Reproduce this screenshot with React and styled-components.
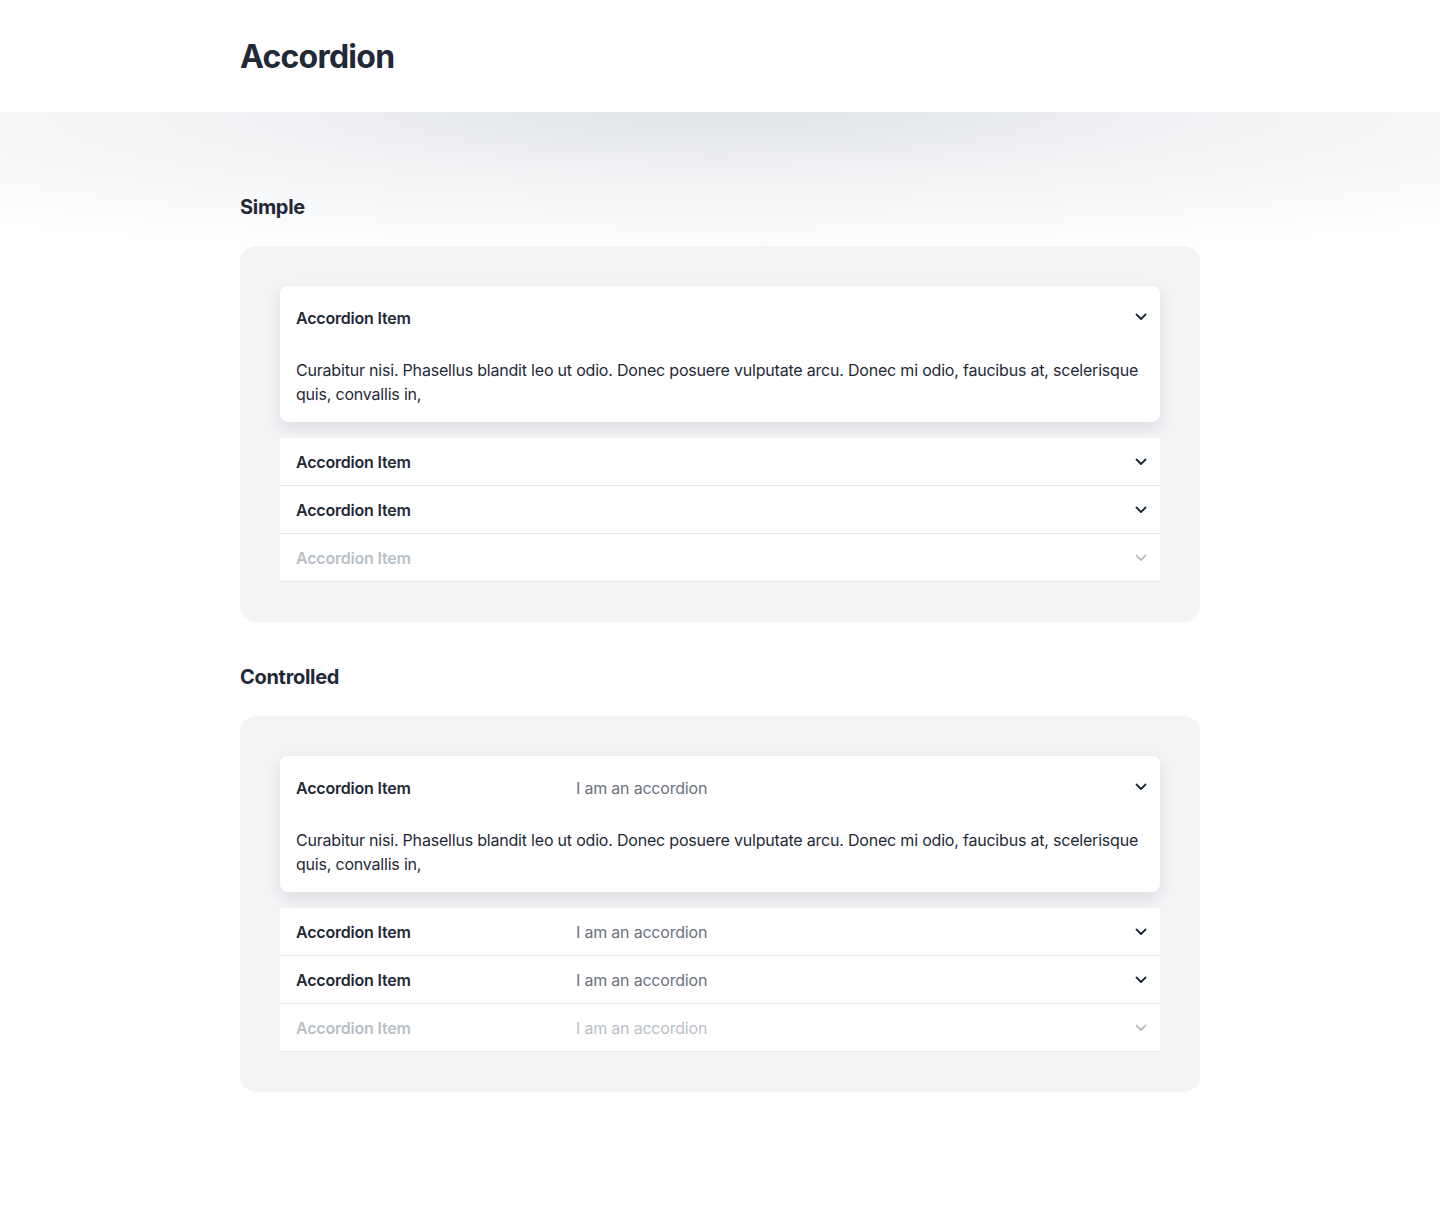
import React, { useState } from 'react';
import styled, { createGlobalStyle } from 'styled-components';

const GlobalStyle = createGlobalStyle`
  body {
    margin: 0;
    background: #fff;
    font-family: Inter, "Noto Sans", sans-serif;
    color: #1f2937;
  }
`;

const BODY_TEXT =
  'Curabitur nisi. Phasellus blandit leo ut odio. Donec posuere vulputate arcu. Donec mi odio, faucibus at, scelerisque quis, convallis in,';

const Chevron = () => (
  <svg width="12" height="8" viewBox="0 0 12 8" fill="none">
    <path d="M1.5 1.5l4.5 4.5 4.5-4.5" stroke="currentColor" strokeWidth="1.8" strokeLinecap="round" strokeLinejoin="round" />
  </svg>
);

const AccordionItem = ({ title, subtitle, open, disabled, onToggle }) => (
  <ItemStyle $open={open}>
    <ItemHeader $disabled={disabled} $open={open} onClick={disabled ? undefined : onToggle}>
      <ItemTitle>{title}</ItemTitle>
      {subtitle && <ItemSubtitle $disabled={disabled}>{subtitle}</ItemSubtitle>}
      <ChevronBox $disabled={disabled} $open={open}>
        <Chevron />
      </ChevronBox>
    </ItemHeader>
    {open && <ItemBody>{BODY_TEXT}</ItemBody>}
  </ItemStyle>
);

const AccordionDemo = ({ withSubtitle }) => {
  const [open, setOpen] = useState(0);
  const items = [0, 1, 2, 3];

  return (
    <Card>
      {items.map((i) => (
        <AccordionItem
          key={i}
          title="Accordion Item"
          subtitle={withSubtitle ? 'I am an accordion' : null}
          open={open === i}
          disabled={i === 3}
          onToggle={() => setOpen(open === i ? -1 : i)}
        />
      ))}
    </Card>
  );
};

const App = () => (
  <>
    <GlobalStyle />
    <Header>
      <Container>
        <PageTitle>Accordion</PageTitle>
      </Container>
    </Header>
    <Main>
      <Container>
        <Section>
          <SectionTitle>Simple</SectionTitle>
          <AccordionDemo />
        </Section>
        <Section>
          <SectionTitle>Controlled</SectionTitle>
          <AccordionDemo withSubtitle />
        </Section>
      </Container>
    </Main>
  </>
);

const Container = styled.div`
  width: 960px;
  margin: 0 auto;
`;

const Header = styled.header`
  height: 112px;
  display: flex;
  align-items: center;
  background: #fff;
`;

const PageTitle = styled.h1`
  margin: 0;
  font-size: 32px;
  line-height: 40px;
  font-weight: 700;
  color: #1f2937;
  letter-spacing: -0.75px;
  padding-top: 2px;
`;

const Main = styled.main`
  padding: 78px 0 120px;
  background:
    radial-gradient(ellipse 80% 150px at 50% 0, rgba(214, 218, 224, 0.75) 0%, rgba(228, 231, 235, 0.5) 45%, rgba(255, 255, 255, 0) 100%);
`;

const Section = styled.section`
  display: flex;
  flex-direction: column;
  gap: 22px;
  margin-bottom: 38px;
`;

const SectionTitle = styled.h2`
  margin: 0;
  font-size: 20px;
  line-height: 34px;
  font-weight: 700;
  color: #1f2937;
  letter-spacing: -0.3px;
`;

const Card = styled.div`
  background: #f3f4f6;
  border-radius: 16px;
  padding: 40px;
  display: flex;
  flex-direction: column;
`;

const ItemStyle = styled.div`
  background: #fff;
  border-radius: ${(p) => (p.$open ? '8px' : '0')};
  border-bottom: ${(p) => (p.$open ? 'none' : '1px solid #e5e7eb')};
  box-shadow: ${(p) => (p.$open ? '0 6px 16px rgba(17, 24, 39, 0.1)' : 'none')};
  margin-bottom: ${(p) => (p.$open ? '16px' : '0')};
`;

const ItemHeader = styled.div`
  display: flex;
  align-items: center;
  padding: 0 16px;
  height: ${(p) => (p.$open ? '64px' : '47px')};
  color: ${(p) => (p.$disabled ? '#b9bfc7' : '#1f2937')};
  cursor: ${(p) => (p.$disabled ? 'default' : 'pointer')};
`;

const ItemTitle = styled.span`
  width: 280px;
  font-size: 16px;
  font-weight: 600;
  line-height: 24px;
  letter-spacing: -0.2px;
`;

const ItemSubtitle = styled.span`
  font-size: 16px;
  line-height: 24px;
  letter-spacing: -0.2px;
  color: ${(p) => (p.$disabled ? '#b9bfc7' : '#6b7280')};
`;

const ChevronBox = styled.span`
  margin-left: auto;
  display: flex;
  margin-top: ${(p) => (p.$open ? '-3px' : '0')};
  margin-right: -3px;
  color: ${(p) => (p.$disabled ? '#b9bfc7' : '#1f2937')};
`;

const ItemBody = styled.div`
  padding: 8px 16px 16px;
  font-size: 16px;
  line-height: 24px;
  letter-spacing: -0.2px;
  color: #1f2937;
`;

export default App;
